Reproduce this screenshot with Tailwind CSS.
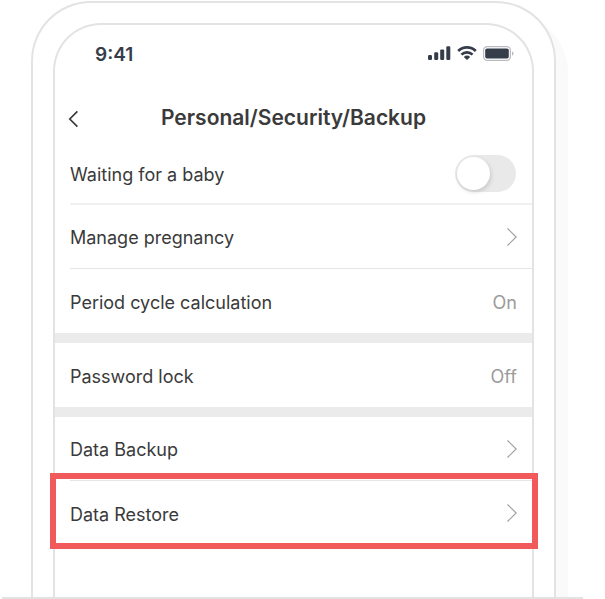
<!DOCTYPE html>
<html lang="en">
<head>
  <meta charset="UTF-8">
  <meta name="viewport" content="width=device-width, initial-scale=1.0">
  <title>Personal/Security/Backup</title>
  <script src="https://cdn.jsdelivr.net/npm/@tailwindcss/browser@4"></script>
</head>
<body class="bg-white font-['Inter','Liberation_Sans',sans-serif] text-[#3a3a3a]">
  <div class="min-h-screen flex flex-col overflow-hidden pt-px">

    <!-- Phone body -->
    <div class="grow flex flex-col ml-[31px] mr-[49px] px-5 pt-5 bg-white border-2 border-b-0 border-[#e3e3e3] rounded-t-[60px] shadow-[12px_12px_0_#fafafa]">

      <!-- Screen -->
      <div class="grow bg-white border-2 border-b-0 border-[#e3e3e3] rounded-t-[48px]">

        <!-- Status bar -->
        <div class="h-14 pl-10 pr-[18px] flex items-center justify-between text-[#363d4a]">
          <span class="pt-[3px] text-[19px] leading-6 font-semibold">9:41</span>
          <div class="flex items-center gap-[6px]">
            <svg class="w-[23px] h-[14px]" viewBox="0 0 23 14" fill="currentColor">
              <rect x="0" y="9" width="4" height="5" rx="1.2"/>
              <rect x="6.2" y="6.2" width="4" height="7.8" rx="1.2"/>
              <rect x="12.2" y="3.4" width="4" height="10.6" rx="1.2"/>
              <rect x="18.3" y="0.2" width="4" height="13.8" rx="1.2"/>
            </svg>
            <svg class="w-5 h-[14px]" viewBox="0 0 20 14" fill="none" stroke="currentColor" stroke-width="2.7">
              <path d="M1.2 5C6.1 0.2 13.9 0.2 18.8 5"/>
              <path d="M4.4 8.6C7.6 5.5 12.4 5.5 15.6 8.6"/>
              <path d="M6.8 11Q10 8.2 13.2 11L10 14Z" fill="currentColor" stroke="none"/>
            </svg>
            <svg class="w-[31px] h-[15px]" viewBox="0 0 31 15">
              <rect x="0.6" y="0.6" width="26.8" height="13.8" rx="3.6" fill="none" stroke="#b9bbc0" stroke-width="1.2"/>
              <rect x="2.2" y="2.4" width="23.6" height="10.2" rx="1.8" fill="#363d4a"/>
              <path d="M29 5.2Q30.6 6 30.6 7.5Q30.6 9 29 9.8Z" fill="#b9bbc0"/>
            </svg>
          </div>
        </div>

        <!-- Title bar -->
        <header class="relative h-[60px] pt-[14px] flex items-center justify-center">
          <button type="button" aria-label="Back" class="absolute left-2 top-[25px] p-1">
            <svg class="w-3 h-[18px]" viewBox="0 0 12 18" fill="none" stroke="#3a3a3a" stroke-width="1.7">
              <path d="M10.4 1.4L2.8 9L10.4 16.6"/>
            </svg>
          </button>
          <h1 class="text-[21px] leading-7 font-semibold">Personal/Security/Backup</h1>
        </header>

        <main class="text-[18px] leading-6">
          <section class="pl-[15px]">
            <div class="h-16 pt-[2px] pr-4 flex items-center justify-between border-b-2 border-[#f0f0f0]">
              <label for="baby" class="pt-[3px]">Waiting for a baby</label>
              <input id="baby" type="checkbox" role="switch" class="appearance-none w-[61px] h-[37px] rounded-full bg-[#e9e9e9] p-[2px] flex items-center before:block before:size-[33px] before:rounded-full before:bg-white before:shadow-[1px_2px_4px_#00000026] checked:bg-green-500 checked:justify-end">
            </div>
            <a href="#pregnancy" class="h-16 pr-[15px] flex items-center justify-between border-b border-[#e6e6e6]">
              <span class="pt-[3px]">Manage pregnancy</span>
              <svg class="w-[10px] h-[18px]" viewBox="0 0 10 18" fill="none" stroke="#a0a0a0" stroke-width="1.2">
                <path d="M0.5 0.5L9.2 9L0.5 17.5"/>
              </svg>
            </a>
            <a href="#cycle" class="h-16 pr-[15px] flex items-center justify-between">
              <span class="pt-[3px]">Period cycle calculation</span>
              <span class="pt-[3px] text-[#9b9b9b]">On</span>
            </a>
          </section>

          <section class="pl-[15px] border-t-10 border-[#ebebeb]">
            <a href="#password" class="h-16 pr-[15px] flex items-center justify-between">
              <span class="pt-[3px]">Password lock</span>
              <span class="pt-[3px] text-[#9b9b9b]">Off</span>
            </a>
          </section>

          <section class="border-t-10 border-[#ebebeb]">
            <a href="#backup" class="h-16 ml-[15px] pr-[15px] flex items-center justify-between border-b border-[#e6e6e6]">
              <span class="pt-[3px]">Data Backup</span>
              <svg class="w-[10px] h-[18px]" viewBox="0 0 10 18" fill="none" stroke="#a0a0a0" stroke-width="1.2">
                <path d="M0.5 0.5L9.2 9L0.5 17.5"/>
              </svg>
            </a>
            <a href="#restore" class="relative h-16 pl-[15px] pr-[15px] flex items-center justify-between">
              <span class="pt-[3px]">Data Restore</span>
              <svg class="w-[10px] h-[18px]" viewBox="0 0 10 18" fill="none" stroke="#a0a0a0" stroke-width="1.2">
                <path d="M0.5 0.5L9.2 9L0.5 17.5"/>
              </svg>
              <!-- Highlight frame -->
              <span class="absolute -left-[5px] -right-[6px] -top-2 -bottom-1 border-6 border-[#f05a5a]"></span>
            </a>
          </section>
        </main>
      </div>
    </div>

    <!-- Ground line -->
    <div class="relative h-[2px] ml-[2px] mr-[22px] bg-[#e3e3e3]"></div>
  </div>
</body>
</html>
